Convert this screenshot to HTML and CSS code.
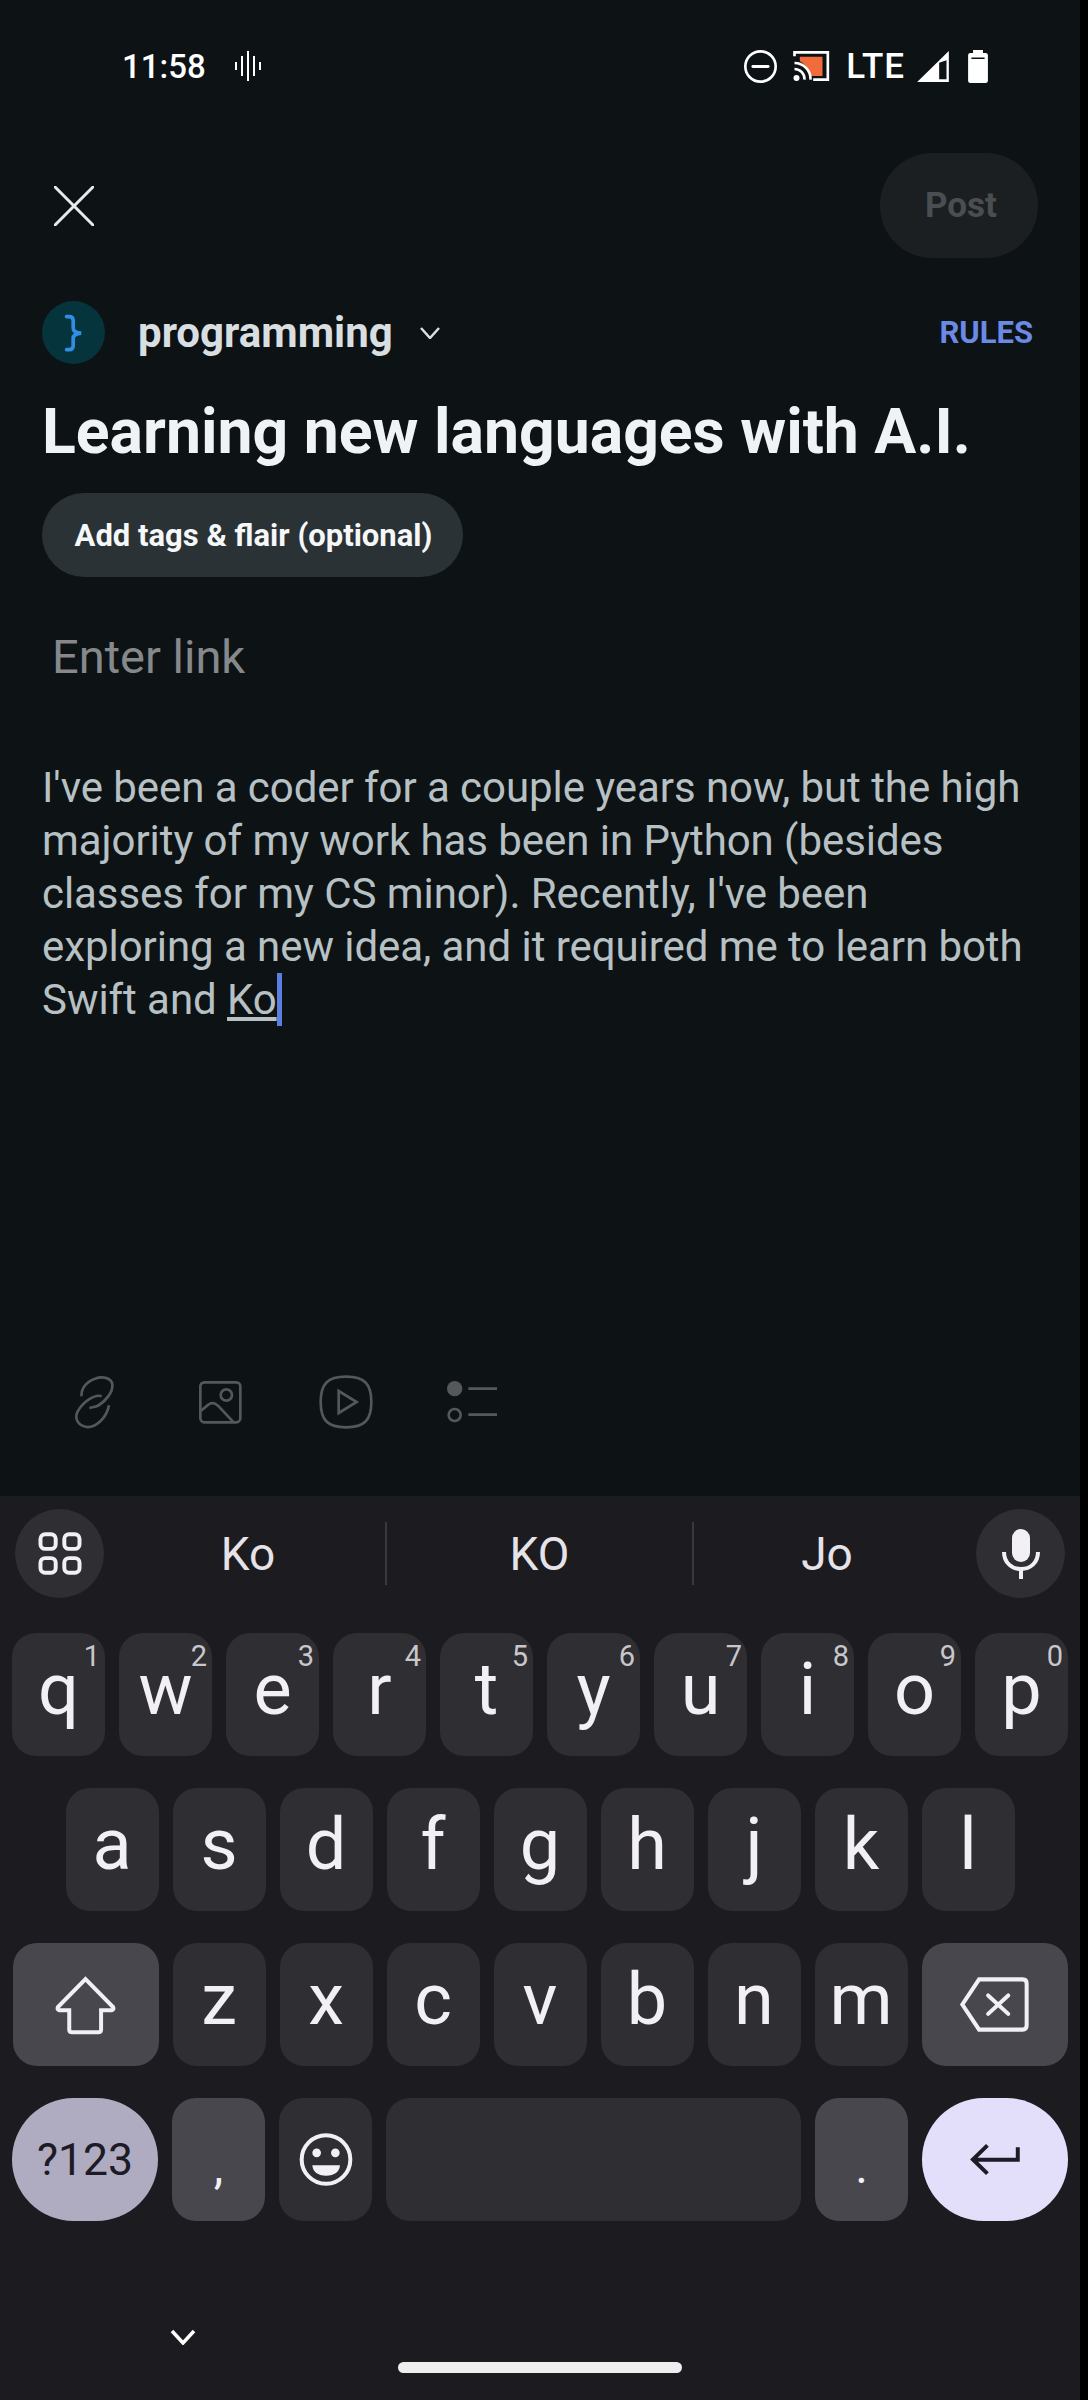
FILE: index.html
```html
<!DOCTYPE html>
<html lang="en">
<head>
    <meta charset="UTF-8">
    <meta name="viewport" content="width=device-width, initial-scale=1.0">
    <title>Create post</title>
    <link rel="stylesheet" href="styles.css">
</head>
<body>
<div class="screen">
    <div class="status-bar">
        <span class="time">11:58</span>
        <svg class="wave" viewBox="0 0 28 30" width="28" height="30">
            <path d="M2 11v8M8 5v20M14 0v30M20 5v20M26 11v8"/>
        </svg>
        <div class="status-icons">
            <svg viewBox="195 62 100 100" width="33" height="33">
                <circle cx="245" cy="112" r="46" fill="none" stroke="#fff" stroke-width="8"/>
                <path d="M222 112h46" stroke="#fff" stroke-width="9" stroke-linecap="round"/>
            </svg>
            <svg viewBox="342 68 110 90" width="37" height="30">
                <path d="M362 85h68v58h-40q-4-34-28-44z" fill="#f26b3a"/>
                <path d="M346 84v-12h100v82h-44M346 104a48 48 0 0 1 48 50M346 122a30 30 0 0 1 30 32" fill="none" stroke="#fff" stroke-width="8"/>
                <circle cx="352" cy="149" r="9" fill="#fff"/>
            </svg>
            <span class="lte">LTE</span>
            <svg class="signal" viewBox="710 65 95 93" width="32" height="31">
                <path fill-rule="evenodd" d="M710 158L805 65V158ZM776 100V150H798V93Z" fill="#fff"/>
            </svg>
            <svg class="battery" viewBox="865 60 60 100" width="20" height="33">
                <path fill-rule="evenodd" d="M880 60h30v9h8q7 0 7 7v77q0 7-7 7h-46q-7 0-7-7V76q0-7 7-7h8zM875 83v4h40v-4z" fill="#fff"/>
            </svg>
        </div>
    </div>

    <div class="top-bar">
        <svg class="close" viewBox="0 0 40 40" width="40" height="40">
            <path d="M1 1L39 39M39 1L1 39"/>
        </svg>
        <div class="post-btn">Post</div>
    </div>

    <div class="community">
        <div class="avatar">
            <svg viewBox="130 70 65 115" width="22" height="38">
                <path d="M140 78h8q12 0 12 12v22q0 14 24 16q-24 2-24 16v22q0 12-12 12h-8"/>
            </svg>
        </div>
        <span class="community-name">programming</span>
        <svg class="chevron" viewBox="0 0 20 12" width="20" height="12">
            <path d="M1 1L10 11L19 1"/>
        </svg>
        <span class="rules">RULES</span>
    </div>

    <div class="title">Learning new languages with A.I.</div>
    <div class="flair">Add tags &amp; flair (optional)</div>
    <div class="link-field">Enter link</div>

    <div class="body-text">I've been a coder for a couple years now, but the high<br>majority of my work has been in Python (besides<br>classes for my CS minor). Recently, I've been<br>exploring a new idea, and it required me to learn both<br>Swift and <u>Ko</u><span class="caret"></span></div>

    <div class="toolbar">
        <svg viewBox="42 35 180 180" width="60" height="60">
            <path d="M95 108C92 90 105 65 135 55C160 45 185 55 187 72C190 95 165 125 140 138L118 143"/>
            <path d="M155 108C135 100 100 125 85 150C72 170 80 195 110 200C135 202 170 175 177 135"/>
        </svg>
        <svg viewBox="421 34 180 180" width="60" height="60">
            <rect x="452" y="65" width="120" height="120" rx="12"/>
            <circle cx="530" cy="103" r="17"/>
            <path d="M454 150L476 132Q490 122 505 135L550 183"/>
        </svg>
        <svg viewBox="800 35 180 180" width="60" height="60">
            <path d="M890 49C945 49 966 70 966 125C966 180 945 201 890 201C835 201 814 180 814 125C814 70 835 49 890 49Z"/>
            <path d="M868 92L922 125L868 158Z"/>
        </svg>
        <svg viewBox="1173 35 180 180" width="60" height="60">
            <circle class="solid" cx="1211" cy="85" r="23"/>
            <circle cx="1211" cy="164" r="18"/>
            <path d="M1252 85h86M1252 163h86"/>
        </svg>
    </div>

    <div class="keyboard">
        <div class="suggest-row">
            <div class="round-btn">
                <svg viewBox="110 152 138 136" width="46" height="45">
                    <rect x="120" y="162" width="46" height="44" rx="14"/>
                    <rect x="192" y="162" width="46" height="44" rx="14"/>
                    <rect x="120" y="234" width="46" height="44" rx="14"/>
                    <rect x="192" y="234" width="46" height="44" rx="14"/>
                </svg>
            </div>
            <div class="suggest suggest-first">Ko</div>
            <div class="suggest-sep"></div>
            <div class="suggest suggest-mid">KO</div>
            <div class="suggest-sep"></div>
            <div class="suggest suggest-last">Jo</div>
            <div class="round-btn">
                <svg class="mic" viewBox="0 0 38 50" width="38" height="50">
                    <rect class="solid" x="10" y="0" width="18" height="33" rx="9"/>
                    <path d="M2 23c0 11 8 17 17 17s17-6 17-17M19 40v10"/>
                </svg>
            </div>
        </div>

        <div class="key-row">
            <div class="key">q<span class="hint">1</span></div>
            <div class="key">w<span class="hint">2</span></div>
            <div class="key">e<span class="hint">3</span></div>
            <div class="key">r<span class="hint">4</span></div>
            <div class="key">t<span class="hint">5</span></div>
            <div class="key">y<span class="hint">6</span></div>
            <div class="key">u<span class="hint">7</span></div>
            <div class="key">i<span class="hint">8</span></div>
            <div class="key">o<span class="hint">9</span></div>
            <div class="key">p<span class="hint">0</span></div>
        </div>
        <div class="key-row">
            <div class="key">a</div>
            <div class="key">s</div>
            <div class="key">d</div>
            <div class="key">f</div>
            <div class="key">g</div>
            <div class="key">h</div>
            <div class="key">j</div>
            <div class="key">k</div>
            <div class="key">l</div>
        </div>
        <div class="key-row">
            <div class="key wide func">
                <svg viewBox="160 130 190 180" width="63" height="60">
                    <path d="M255 142L338 226Q342 234 333 236H302V294Q302 302 294 302H214Q206 302 206 294V236H177Q168 234 172 226Z"/>
                </svg>
            </div>
            <div class="key">z</div>
            <div class="key">x</div>
            <div class="key">c</div>
            <div class="key">v</div>
            <div class="key">b</div>
            <div class="key">n</div>
            <div class="key">m</div>
            <div class="key wide func">
                <svg viewBox="175 145 212 170" width="71" height="57">
                    <path d="M235 155H365Q377 155 377 167V293Q377 305 365 305H235L185 230Z"/>
                    <path d="M262 203L322 258M322 203L262 258" stroke-linecap="round"/>
                </svg>
            </div>
        </div>
        <div class="key-row">
            <div class="key wide pill symbols">?123</div>
            <div class="key func small-mark">,</div>
            <div class="key">
                <svg viewBox="895 606 162 164" width="54" height="55">
                    <circle cx="976" cy="688" r="73"/>
                    <circle class="solid" cx="948" cy="668" r="13"/>
                    <circle class="solid" cx="1004" cy="668" r="13"/>
                    <path class="solid" d="M935 705H1018Q1015 735 976 737Q938 735 935 705Z"/>
                </svg>
            </div>
            <div class="key space"></div>
            <div class="key func small-mark">.</div>
            <div class="key wide pill enter">
                <svg viewBox="200 645 165 100" width="55" height="33">
                    <path d="M350 658V696H215M258 652L214 695L258 738"/>
                </svg>
            </div>
        </div>

        <div class="kb-hide">
            <svg viewBox="0 0 26 16" width="26" height="16">
                <path d="M2 2L13 14L24 2"/>
            </svg>
        </div>
        <div class="home-pill"></div>
    </div>
</div>
</body>
</html>
```

FILE: styles.css
```css
* {
    box-sizing: border-box;
}
body {
    margin: 0;
    background-color: #000;
    font-family: Roboto, "Liberation Sans", sans-serif;
}
.screen {
    width: 1080px;
    height: 2400px;
    background-color: #0d1215;
    display: flex;
    flex-direction: column;
    overflow: hidden;
}

/* status bar */
.status-bar {
    height: 132px;
    flex-shrink: 0;
    display: flex;
    align-items: center;
    padding: 0 92px 0 122px;
    color: #fff;
}
.time {
    font-size: 33px;
    font-weight: 500;
}
.wave {
    margin-left: 28px;
}
.wave path {
    stroke: #fff;
    stroke-width: 2;
    fill: none;
}
.status-icons {
    margin-left: auto;
    display: flex;
    align-items: center;
    gap: 16px;
}
.lte {
    font-size: 35px;
    font-weight: 500;
    letter-spacing: 1px;
}
.signal {
    margin-left: -4px;
}
.battery {
    margin-left: 3px;
}

/* header */
.top-bar {
    display: flex;
    justify-content: space-between;
    align-items: center;
    padding: 21px 42px 0 54px;
}
.close path {
    stroke: #e6eaeb;
    stroke-width: 3;
    stroke-linecap: round;
    fill: none;
}
.post-btn {
    width: 158px;
    height: 105px;
    border-radius: 52px;
    background-color: #1b1f22;
    color: #4a4e51;
    font-size: 35px;
    font-weight: 700;
    padding-left: 4px;
    display: flex;
    align-items: center;
    justify-content: center;
}
.community {
    display: flex;
    align-items: center;
    margin-top: 43px;
    padding: 0 47px 0 42px;
}
.avatar {
    width: 63px;
    height: 63px;
    border-radius: 50%;
    background-color: #06343c;
    display: flex;
    align-items: center;
    justify-content: center;
}
.avatar path {
    stroke: #2f8fe6;
    stroke-width: 11;
    stroke-linecap: round;
    fill: none;
}
.community-name {
    margin-left: 33px;
    font-size: 42px;
    font-weight: 700;
    color: #d9dfe1;
}
.chevron {
    margin-left: 27px;
}
.chevron path {
    stroke: #d9dfe1;
    stroke-width: 2.5;
    fill: none;
}
.rules {
    margin-left: auto;
    font-size: 31px;
    font-weight: 700;
    color: #6a8ae6;
}
.title {
    margin-top: 33px;
    padding-left: 42px;
    font-size: 62.5px;
    line-height: 70px;
    font-weight: 700;
    color: #f0f3f5;
    white-space: nowrap;
}
.flair {
    align-self: flex-start;
    margin: 26px 0 0 42px;
    height: 84px;
    width: 421px;
    border-radius: 42px;
    background-color: #2b3235;
    color: #f5f7f8;
    font-size: 31px;
    font-weight: 700;
    padding-left: 2px;
    display: flex;
    align-items: center;
    justify-content: center;
}
.link-field {
    margin-top: 50px;
    padding-left: 52px;
    font-size: 47px;
    line-height: 60px;
    color: #85898b;
}
.body-text {
    margin-top: 74px;
    padding-left: 42px;
    font-size: 42px;
    line-height: 53px;
    letter-spacing: -0.06px;
    color: #b7c1c4;
    white-space: nowrap;
}
.caret {
    display: inline-block;
    width: 5px;
    height: 53px;
    vertical-align: -12px;
    background-color: #5b7fe0;
}
.toolbar {
    margin-top: auto;
    margin-bottom: 64px;
    padding-left: 64px;
    display: flex;
    gap: 66px;
}
.toolbar svg * {
    fill: none;
    stroke: #54585a;
    stroke-width: 8;
}
.toolbar svg .solid {
    fill: #54585a;
    stroke: none;
}

/* keyboard */
.keyboard {
    height: 904px;
    flex-shrink: 0;
    background-color: #1c1b20;
    padding: 13px 12px 0;
}
.suggest-row {
    display: flex;
    align-items: center;
    height: 89px;
    padding: 0 3px;
}
.round-btn {
    width: 89px;
    height: 89px;
    flex-shrink: 0;
    border-radius: 50%;
    background-color: #2f2e33;
    display: flex;
    align-items: center;
    justify-content: center;
}
.round-btn svg * {
    fill: none;
    stroke: #f2f0f4;
    stroke-width: 12;
}
.round-btn .mic * {
    stroke-width: 4;
}
.round-btn svg .solid {
    fill: #f2f0f4;
    stroke: none;
}
.suggest {
    text-align: center;
    font-size: 46px;
    color: #e6e3e8;
}
.suggest-first {
    width: 281px;
    padding-left: 7px;
}
.suggest-mid {
    width: 305px;
}
.suggest-last {
    width: 282px;
    padding-right: 16px;
}
.suggest-sep {
    width: 2px;
    height: 63px;
    background-color: #3a393e;
}
.key-row {
    display: flex;
    justify-content: center;
    gap: 14px;
    height: 123px;
    margin-top: 32px;
}
.suggest-row + .key-row {
    margin-top: 35px;
}
.key {
    position: relative;
    width: 93px;
    flex-shrink: 0;
    border-radius: 24px;
    background-color: #2f2e33;
    color: #f2f0f4;
    font-size: 72px;
    padding-bottom: 10px;
    display: flex;
    align-items: center;
    justify-content: center;
}
.key svg {
    margin-top: 10px;
}
.key svg * {
    fill: none;
    stroke: #f2f0f4;
    stroke-width: 12;
}
.key svg .solid {
    fill: #f2f0f4;
    stroke: none;
}
.hint {
    position: absolute;
    top: 9px;
    right: 5px;
    font-size: 29px;
    line-height: 28px;
    color: #c9c7cd;
}
.wide {
    width: 146px;
}
.func {
    background-color: #48474d;
}
.small-mark {
    font-size: 48px;
    padding: 14px 0 0;
}
.space {
    flex: 1;
}
.pill {
    border-radius: 62px;
}
.symbols {
    background-color: #afacc1;
    color: #1d1b26;
    font-size: 44.5px;
    padding: 0;
}
.enter {
    background-color: #e3dffb;
}
.enter svg * {
    stroke: #1d1b26;
    stroke-width: 12;
}
.kb-hide {
    margin-top: 108px;
    padding-left: 158px;
    height: 16px;
    display: flex;
}
.kb-hide path {
    fill: none;
    stroke: #fff;
    stroke-width: 3.5;
}
.home-pill {
    width: 284px;
    height: 11px;
    margin: 17px auto 0;
    border-radius: 6px;
    background-color: #eeeeee;
}
```
